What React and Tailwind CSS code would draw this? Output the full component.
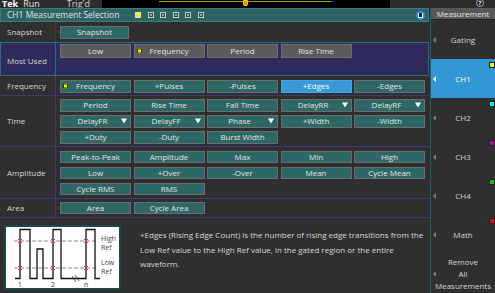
import clsx from "clsx";

const Btn = ({ children, v = "teal", dot, drop }) => (
  <div
    className={clsx(
      "relative w-[71px] flex items-center justify-center border text-[8px] leading-none",
      v === "teal" && "h-[12.5px] bg-[#2d6766] border-[#6c6c6c] text-[#e4e4e4]",
      v === "grey" && "h-[14px] bg-[#5b5b5b] border-[#6e6e6e] text-[#e2e2e2]",
      v === "blue" && "h-[12.5px] bg-[#379ad6] border-[#4aa8e0] text-white"
    )}
  >
    {dot && (
      <span className="absolute left-[2px] top-1/2 -translate-y-1/2 w-[5px] h-[5px] bg-[#f2f200] border border-[#3a3a00]" />
    )}
    <span className={clsx(drop && "-ml-[6px]")}>{children}</span>
    {drop && (
      <span className="absolute right-[3px] top-1/2 -translate-y-1/2 w-0 h-0 border-l-[3.5px] border-r-[3.5px] border-t-[5px] border-l-transparent border-r-transparent border-t-white" />
    )}
  </div>
);

const Row = ({ label, h, pt, children }) => (
  <div className={clsx("flex border-b border-[#38387a]", h)}>
    <div className="w-[56px] shrink-0 border-r border-[#38387a] flex items-center pl-[7px] text-[8px] text-[#d6d6d6]">
      {label}
    </div>
    <div className={clsx("pl-[4px] grid grid-cols-[repeat(5,71px)] gap-x-[2.5px] gap-y-[3.5px] content-start", pt)}>
      {children}
    </div>
  </div>
);

const SideItem = ({ label, active, mark, markColor }) => (
  <div
    className={clsx(
      "relative h-[39px] flex items-center justify-center text-[8px] leading-[12px] text-center",
      active ? "bg-[#3198d4] text-white" : "text-[#d4d4d4]"
    )}
  >
    <span
      className={clsx(
        "absolute left-[2px] top-1/2 -translate-y-1/2 w-0 h-0 border-t-[3px] border-b-[3px] border-r-[3px] border-t-transparent border-b-transparent",
        active ? "border-r-white" : "border-r-[#777]"
      )}
    />
    {label}
    {mark && <span className={clsx("absolute right-0 top-[3px] w-[6px] h-[6px] border border-[#222]", markColor)} />}
  </div>
);

const Chart = () => (
  <svg width="113" height="61" viewBox="0 0 113 61">
    <line x1="8" y1="14" x2="90" y2="14" stroke="#8a8a8a" strokeWidth="1" strokeDasharray="4 2" />
    <line x1="8" y1="41" x2="90" y2="41" stroke="#8a8a8a" strokeWidth="1" strokeDasharray="4 2" />
    <path
      d="M9 51.5 H14 V2.5 H24 V51.5 H31 V22 H37 V51.5 H47 V2.5 H55 V51.5 H80 V2.5 H89 V51.5 H94"
      fill="none"
      stroke="#111"
      strokeWidth="1.3"
    />
    <path d="M66 49 L70 55 M69 48 L73 54" stroke="#333" strokeWidth="0.8" />
    {[14, 47, 80].map((x) =>
      [14, 41].map((y) => (
        <path
          key={x + "-" + y}
          d={`M${x - 2} ${y - 2} L${x + 2} ${y + 2} M${x + 2} ${y - 2} L${x - 2} ${y + 2}`}
          stroke="#e8383d"
          strokeWidth="1"
        />
      ))
    )}
    <g fontSize="7" fill="#444" fontFamily="Open Sans, sans-serif">
      <text x="95" y="13.5">High</text>
      <text x="95" y="22.5">Ref</text>
      <text x="95" y="37.5">Low</text>
      <text x="95" y="46.5">Ref</text>
      <text x="12" y="60">1</text>
      <text x="45" y="60">2</text>
      <text x="78" y="60">n</text>
    </g>
  </svg>
);

export default function App() {
  return (
    <div className="w-[495px] h-[293px] overflow-hidden bg-[#2f2f2f] font-['Open_Sans',sans-serif] relative">
      {/* status strip */}
      <div className="h-[8px] flex overflow-hidden bg-[#2c2c2c]">
        <div className="w-[102px] flex items-end text-[9px] leading-none text-white -mt-[3px]">
          <span className="font-bold pl-[2px]">Tek</span>
          <span className="pl-[5px] text-[#e0e0e0]">Run</span>
          <span className="pl-[27px] text-[#d0d0d0]">Trig'd</span>
        </div>
        <div className="relative w-[288px] bg-black">
          <div className="absolute left-[57px] top-[1px] w-[173px] h-[1px] bg-[#a6a600]" />
          <div className="absolute left-[141px] top-0 w-[5px] h-[6px] rounded-b-[2px] bg-[#f08a00] border border-[#ffd000]" />
        </div>
        <div className="flex-1 relative">
          <div className="absolute left-[86px] -top-[1px] w-[8px] h-[8px] rounded-full border border-[#aaa] bg-[#1b1b1b] text-[6px] leading-[6px] text-white text-center font-bold">
            ?
          </div>
        </div>
      </div>

      <div className="flex h-[285px]">
        {/* main panel */}
        <div className="w-[430px] flex flex-col">
          <div className="h-[14px] flex items-center bg-[#2c6464] border border-[#3f7a7a] text-[8.5px] text-[#e2e2e2] pl-[6px] mr-[1px]">
            <span className="w-[128px]">CH1 Measurement Selection</span>
            <div className="flex gap-[6.5px]">
              <span className="w-[6px] h-[6px] bg-[#f4f400] border border-[#ddd]" />
              {[0, 1, 2, 3, 4].map((i) => (
                <span key={i} className="w-[6px] h-[6px] border border-[#c8c8c8] bg-[#2c4c4c] flex items-center justify-center">
                  <span className="w-[2px] h-[2px] bg-[#9aa]" />
                </span>
              ))}
            </div>
            <div className="ml-auto mr-[3px] w-[9px] h-[9px] rounded-full bg-[#1e8fff] flex items-center justify-center">
              <span className="w-[5px] h-[5px] bg-[#1a1a2a] border border-white border-t-0" />
            </div>
          </div>

          <div className="h-[20px] flex">
            <div className="w-[56px] border-r border-[#3c3c3c] flex items-center pl-[7px] text-[8px] text-[#d6d6d6]">Snapshot</div>
            <div className="pl-[4px] pt-[4px]">
              <div className="w-[69px] h-[12.5px] bg-[#2d6766] border border-[#6c6c6c] text-[8px] leading-none text-[#e4e4e4] flex items-center justify-center">
                Snapshot
              </div>
            </div>
          </div>

          <div className="h-[34px] flex bg-[#2e2b5c] border border-[#2a6c7c] mr-[1px]">
            <div className="w-[55px] border-r border-[#2a6c7c] flex items-center pl-[6px] pt-[4px] text-[8px] text-[#d6d6d6]">Most Used</div>
            <div className="pl-[4px] pt-[1px] flex gap-x-[2.5px] items-start">
              <Btn v="grey">Low</Btn>
              <Btn v="grey" dot>Frequency</Btn>
              <Btn v="grey">Period</Btn>
              <Btn v="grey">Rise Time</Btn>
            </div>
          </div>

          <Row label="Frequency" h="h-[20px]" pt="pt-[4px]">
            <Btn dot>Frequency</Btn>
            <Btn>+Pulses</Btn>
            <Btn>-Pulses</Btn>
            <Btn v="blue">+Edges</Btn>
            <Btn>-Edges</Btn>
          </Row>

          <Row label="Time" h="h-[51px]" pt="pt-[3px]">
            <Btn>Period</Btn>
            <Btn>Rise Time</Btn>
            <Btn>Fall Time</Btn>
            <Btn drop>DelayRR</Btn>
            <Btn drop>DelayRF</Btn>
            <Btn drop>DelayFR</Btn>
            <Btn drop>DelayFF</Btn>
            <Btn drop>Phase</Btn>
            <Btn>+Width</Btn>
            <Btn>-Width</Btn>
            <Btn>+Duty</Btn>
            <Btn>-Duty</Btn>
            <Btn>Burst Width</Btn>
          </Row>

          <Row label="Amplitude" h="h-[52px]" pt="pt-[3.5px]">
            <Btn>Peak-to-Peak</Btn>
            <Btn>Amplitude</Btn>
            <Btn>Max</Btn>
            <Btn>Min</Btn>
            <Btn>High</Btn>
            <Btn>Low</Btn>
            <Btn>+Over</Btn>
            <Btn>-Over</Btn>
            <Btn>Mean</Btn>
            <Btn>Cycle Mean</Btn>
            <Btn>Cycle RMS</Btn>
            <Btn>RMS</Btn>
          </Row>

          <Row label="Area" h="h-[19px]" pt="pt-[2.5px]">
            <Btn>Area</Btn>
            <Btn>Cycle Area</Btn>
          </Row>

          <div className="flex-1 flex">
            <div className="ml-[4px] mt-[7px] w-[117px] h-[65px] border-2 border-[#1d4848] bg-white">
              <Chart />
            </div>
            <p className="ml-[19px] mt-[10px] w-[290px] text-[8px] leading-[14.5px] text-[#d8d8d8]">
              +Edges (Rising Edge Count) is the number of rising edge transitions from the Low Ref value to the High Ref value, in the gated region or the entire waveform.
            </p>
          </div>
        </div>

        {/* side menu */}
        <div className="flex-1 flex flex-col border-l border-[#1f5e6c]">
          <div className="h-[12px] bg-[#585858] border-b border-[#222] text-[8px] leading-[11px] text-[#e6e6e6] text-center">
            Measurement
          </div>
          <SideItem label="Gating" />
          <SideItem label="CH1" active mark markColor="bg-[#f4f400]" />
          <SideItem label="CH2" mark markColor="bg-[#00f0f0]" />
          <SideItem label="CH3" mark markColor="bg-[#c000c0]" />
          <SideItem label="CH4" mark markColor="bg-[#10c010]" />
          <SideItem label="Math" mark markColor="bg-[#f00000]" />
          <SideItem
            label={
              <span>
                Remove
                <br />
                All
                <br />
                Measurements
              </span>
            }
          />
        </div>
      </div>
    </div>
  );
}
